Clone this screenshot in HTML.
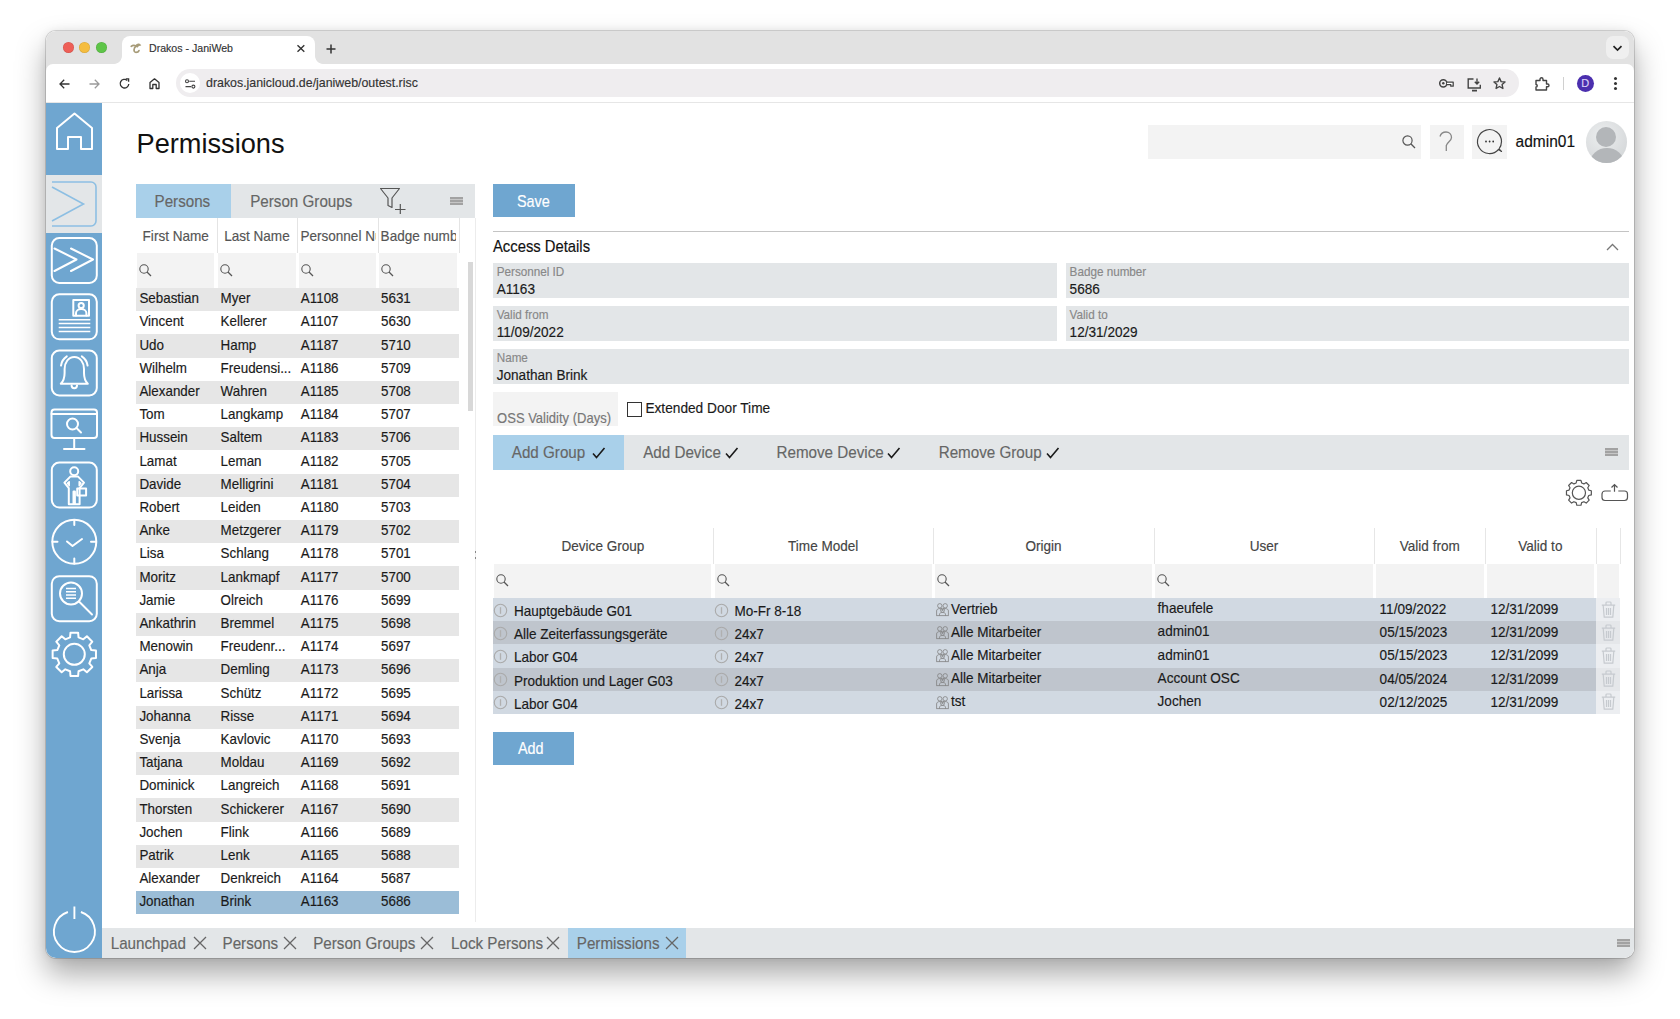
<!DOCTYPE html>
<html><head><meta charset="utf-8">
<style>
*{box-sizing:border-box;margin:0;padding:0}
html,body{width:1680px;height:1019px;overflow:hidden;background:#fff;font-family:"Liberation Sans",sans-serif;}
.a{position:absolute}
#win{position:absolute;left:46px;top:31px;width:1588px;height:927px;border-radius:10px;overflow:hidden;background:#fff;}
#shadow{position:absolute;left:46px;top:31px;width:1588px;height:927px;border-radius:10px;
 box-shadow:0 0 0 1px rgba(0,0,0,0.14),0 16px 30px 0px rgba(0,0,0,0.34),0 0 10px rgba(0,0,0,0.08);}
.t{position:absolute;white-space:pre;line-height:1;-webkit-text-stroke:0.15px currentColor}
svg{position:absolute;overflow:visible}
</style></head><body>
<div id="shadow"></div>
<div id="win">
<div id="pg" class="a" style="left:-46px;top:-31px;width:1680px;height:1019px">

<div class="a" style="left:46.00px;top:31.00px;width:1588.00px;height:41.00px;background:#e2e2e2;"></div>
<div class="a" style="left:62.9px;top:42.3px;width:11px;height:11px;border-radius:50%;background:#ee5f57;box-shadow:inset 0 0 0 0.5px rgba(0,0,0,.12)"></div>
<div class="a" style="left:79.3px;top:42.3px;width:11px;height:11px;border-radius:50%;background:#f5bd3f;box-shadow:inset 0 0 0 0.5px rgba(0,0,0,.12)"></div>
<div class="a" style="left:96.0px;top:42.3px;width:11px;height:11px;border-radius:50%;background:#5ec548;box-shadow:inset 0 0 0 0.5px rgba(0,0,0,.12)"></div>
<div class="a" style="left:122.00px;top:36.00px;width:192.50px;height:30.00px;background:#fff;border-radius:8px 8px 0 0"></div>
<div class="a" style="left:114px;top:56px;width:8px;height:8px;background:radial-gradient(circle at 0 0,#e2e2e2 7.5px,#fff 8.2px)"></div>
<div class="a" style="left:314.5px;top:56px;width:8px;height:8px;background:radial-gradient(circle at 100% 0,#e2e2e2 7.5px,#fff 8.2px)"></div>
<svg style="left:130px;top:42px;" width="12" height="12" viewBox="0 0 12 12"><g stroke="#a79b78" stroke-width="1.7" fill="none" stroke-linecap="round"><path d="M1.2 4.3C2.5 3.2 4.8 3.2 6.3 4.3"/><path d="M6.3 4.3C3.5 5.5 3.2 10.4 6 10.4C7.6 10.4 8.6 9.6 9 8.6"/></g><path d="M5.5 3.8C6.5 1.2 9.5 0.6 11.3 3.5C9.5 3.5 8.3 4.4 7.6 5.8Z" fill="#a79b78"/></svg>
<div class="t" style="left:149.00px;top:43.32px;font-size:10.6px;color:#333;">Drakos - JaniWeb</div>
<svg style="left:297px;top:44.5px;" width="8" height="7" viewBox="0 0 8 7"><path d="M0.5 0.3L7.3 6.7M7.3 0.3L0.5 6.7" stroke="#333" stroke-width="1.4"/></svg>
<svg style="left:326px;top:43.5px;" width="10" height="10" viewBox="0 0 10 10"><path d="M5 0.5V9.5M0.5 5H9.5" stroke="#333" stroke-width="1.5"/></svg>
<div class="a" style="left:1605.70px;top:36.20px;width:23.00px;height:23.00px;background:#efefef;border-radius:7px"></div>
<svg style="left:1612px;top:45px;" width="11" height="7" viewBox="0 0 11 7"><path d="M1.5 1.2L5.5 5L9.5 1.2" stroke="#222" stroke-width="1.7" fill="none"/></svg>
<div class="a" style="left:46.00px;top:64.30px;width:1588.00px;height:38.70px;background:#fff;border-radius:7px 7px 0 0"></div>
<div class="a" style="left:46.00px;top:102.00px;width:1588.00px;height:1.00px;background:#e6e6e6;"></div>
<svg style="left:59px;top:78.5px;" width="11" height="10" viewBox="0 0 11 10"><path d="M10.5 5H1.2M5.2 0.8L1 5L5.2 9.2" stroke="#333" stroke-width="1.3" fill="none"/></svg>
<svg style="left:89px;top:78.5px;" width="11" height="10" viewBox="0 0 11 10"><path d="M0.5 5H9.8M5.8 0.8L10 5L5.8 9.2" stroke="#9a9a9a" stroke-width="1.3" fill="none"/></svg>
<svg style="left:118.5px;top:78px;" width="11" height="11" viewBox="0 0 11 11"><path d="M9.8 6A4.3 4.3 0 1 1 8.3 2.4" stroke="#333" stroke-width="1.3" fill="none"/><path d="M6.8 0.9H9.6V3.7" stroke="#333" stroke-width="1.3" fill="none"/></svg>
<svg style="left:148.5px;top:78px;" width="11" height="11" viewBox="0 0 11 11"><path d="M1 10.5V4.5L5.5 0.8L10 4.5V10.5H7.2V6.5H3.8V10.5Z" stroke="#333" stroke-width="1.3" fill="none" stroke-linejoin="round"/></svg>
<div class="a" style="left:175.50px;top:69.30px;width:1343.00px;height:28.00px;background:#efedef;border-radius:14px"></div>
<div class="a" style="left:180px;top:73.3px;width:20px;height:20px;border-radius:50%;background:#fff"></div>
<svg style="left:184.5px;top:78.5px;" width="11" height="10" viewBox="0 0 11 10"><circle cx="2" cy="2.2" r="1.5" stroke="#444" stroke-width="1.1" fill="none"/><path d="M4.2 2.2H10M0.5 7.6H6.2" stroke="#444" stroke-width="1.1"/><circle cx="8.4" cy="7.6" r="1.5" stroke="#444" stroke-width="1.1" fill="none"/></svg>
<div class="t" style="left:206.00px;top:76.91px;font-size:12.38px;color:#333;">drakos.janicloud.de/janiweb/outest.risc</div>
<svg style="left:1439px;top:79px;" width="16" height="9" viewBox="0 0 16 9"><circle cx="4.3" cy="4.3" r="3.6" stroke="#444" stroke-width="1.5" fill="none"/><circle cx="4.3" cy="4.3" r="1.2" fill="#444"/><path d="M8 3.2H14.2V7.2H11.8V5.6H8" stroke="#444" stroke-width="1.3" fill="#fff" stroke-linejoin="round"/></svg>
<svg style="left:1466.5px;top:77.5px;" width="15" height="14" viewBox="0 0 15 14"><path d="M6.5 1H1.2V10H13.3V6.8" stroke="#444" stroke-width="1.4" fill="none"/><path d="M5 12.6H10" stroke="#444" stroke-width="1.8"/><path d="M10 0.5V6M7.8 3.8L10 6L12.2 3.8" stroke="#444" stroke-width="1.4" fill="none"/></svg>
<svg style="left:1493px;top:76.8px;" width="13" height="13" viewBox="0 0 13 13"><path d="M6.5 1L8.1 4.6L12 5L9.1 7.6L9.9 11.5L6.5 9.5L3.1 11.5L3.9 7.6L1 5L4.9 4.6Z" stroke="#444" stroke-width="1.4" fill="none" stroke-linejoin="round"/></svg>
<svg style="left:1534.5px;top:76.5px;" width="15" height="14" viewBox="0 0 15 14"><path d="M1 3.5H5V2.2A1.5 1.5 0 0 1 8 2.2V3.5H11.5V7H12.6A1.4 1.4 0 0 1 12.6 9.8H11.5V13H1V10A1.2 1.2 0 0 0 1 7.5Z" stroke="#444" stroke-width="1.4" fill="none" stroke-linejoin="round"/></svg>
<div class="a" style="left:1563.00px;top:77.00px;width:1.00px;height:13.00px;background:#d0d0d0;"></div>
<div class="a" style="left:1577px;top:75px;width:17px;height:17px;border-radius:50%;background:#4b2fae"></div>
<div class="t" style="left:1581.30px;top:78.18px;font-size:11px;color:#dcd3f7;">D</div>
<div class="a" style="left:1614.2px;top:76.5px;width:3px;height:3px;border-radius:50%;background:#333"></div>
<div class="a" style="left:1614.2px;top:81.5px;width:3px;height:3px;border-radius:50%;background:#333"></div>
<div class="a" style="left:1614.2px;top:86.5px;width:3px;height:3px;border-radius:50%;background:#333"></div>
<div class="a" style="left:46.00px;top:103.00px;width:56.40px;height:855.00px;background:#6fa6d0;"></div>
<div class="a" style="left:46.00px;top:175.30px;width:56.40px;height:57.30px;background:#e3e6e8;"></div>
<svg style="left:46px;top:103px;" width="56" height="72" viewBox="0 0 56 72"><path d="M11 46V25L28.5 10.5L46 25V46H35V34H22V46Z" stroke="#fff" stroke-width="2" fill="none" stroke-linejoin="round" stroke-linecap="round"/></svg>
<svg style="left:46px;top:175px;" width="56" height="58" viewBox="0 0 56 58"><path d="M6 7H45A5 5 0 0 1 50 12V46A5 5 0 0 1 45 51H6" stroke="#8dbfe3" stroke-width="1.6" fill="none"/><path d="M6 12L37.5 29L6 46" stroke="#8dbfe3" stroke-width="1.6" fill="none"/></svg>
<svg style="left:46px;top:232px;" width="56" height="57" viewBox="0 0 56 57"><rect x="5.8" y="6" width="45" height="45" rx="7.5" stroke="#fff" stroke-width="2" fill="none" stroke-linejoin="round" stroke-linecap="round"/><path d="M8.5 16.5L30.5 27.5L8.5 39M25 16.5L47 27.5L25 39" stroke="#fff" stroke-width="2" fill="none" stroke-linejoin="round" stroke-linecap="round"/></svg>
<svg style="left:46px;top:289px;" width="56" height="57" viewBox="0 0 56 57"><rect x="5.8" y="5.3" width="45" height="45" rx="7.5" stroke="#fff" stroke-width="2" fill="none" stroke-linejoin="round" stroke-linecap="round"/><rect x="27.3" y="11" width="15.7" height="15.8" stroke="#fff" stroke-width="2" fill="none" stroke-linejoin="round" stroke-linecap="round"/><circle cx="35.2" cy="16.5" r="2.6" stroke="#fff" stroke-width="2" fill="none" stroke-linejoin="round" stroke-linecap="round"/><path d="M30 26.5V24A5.2 4 0 0 1 40.4 24V26.5" stroke="#fff" stroke-width="2" fill="none" stroke-linejoin="round" stroke-linecap="round"/><path d="M12.7 30.8H44.3M12.7 34.5H44.3M12.7 38.5H44.3M12.7 42.5H44.3" stroke="#fff" stroke-width="1.6"/></svg>
<svg style="left:46px;top:346px;" width="56" height="57" viewBox="0 0 56 57"><rect x="5.8" y="4.5" width="45" height="45" rx="7.5" stroke="#fff" stroke-width="2" fill="none" stroke-linejoin="round" stroke-linecap="round"/><path d="M14.8 37.8C17.8 34.8 18.6 31 18.6 27V23C18.6 16.5 22.5 10.9 28.3 10.9C34.1 10.9 38 16.5 38 23V27C38 31 38.8 34.8 41.8 37.8Z" stroke="#fff" stroke-width="2" fill="none" stroke-linejoin="round" stroke-linecap="round"/><path d="M25.6 39.6A2.7 2.7 0 0 0 31 39.6" stroke="#fff" stroke-width="2" fill="none" stroke-linejoin="round" stroke-linecap="round"/><path d="M20.8 10.4A13 13 0 0 0 15 19.6M35.8 10.4A13 13 0 0 1 41.6 19.6" stroke="#fff" stroke-width="2" fill="none" stroke-linejoin="round" stroke-linecap="round"/></svg>
<svg style="left:46px;top:403px;" width="56" height="57" viewBox="0 0 56 57"><rect x="5.5" y="6.5" width="45.5" height="28.5" rx="3" stroke="#fff" stroke-width="2" fill="none" stroke-linejoin="round" stroke-linecap="round"/><path d="M5.5 11H51" stroke="#fff" stroke-width="2" fill="none" stroke-linejoin="round" stroke-linecap="round"/><circle cx="26.5" cy="21" r="5.5" stroke="#fff" stroke-width="2" fill="none" stroke-linejoin="round" stroke-linecap="round"/><path d="M30.5 25L35 29.5" stroke="#fff" stroke-width="2" fill="none" stroke-linejoin="round" stroke-linecap="round"/><path d="M28.2 35V45.5M18 46H38.5" stroke="#fff" stroke-width="2" fill="none" stroke-linejoin="round" stroke-linecap="round"/></svg>
<svg style="left:46px;top:460px;" width="56" height="57" viewBox="0 0 56 57"><rect x="5.8" y="2.6" width="45" height="45" rx="7.5" stroke="#fff" stroke-width="2" fill="none" stroke-linejoin="round" stroke-linecap="round"/><circle cx="28.2" cy="11.2" r="4" stroke="#fff" stroke-width="2" fill="none" stroke-linejoin="round" stroke-linecap="round"/><path d="M24.3 16.6H32.1L38 22.6L33.6 28.2V44.2H28.9V31.6H27.5V44.2H22.8V28.2L18.4 22.6Z" stroke="#fff" stroke-width="2" fill="none" stroke-linejoin="round" stroke-linecap="round"/><path d="M23.3 21.6V25.8L21.3 23.2Z M33.1 21.6V25.8L35.1 23.2Z" stroke="#fff" stroke-width="1.3" fill="#fff" stroke-linejoin="round"/><rect x="31.2" y="28.6" width="8.9" height="7" stroke="#fff" stroke-width="2" fill="none" stroke-linejoin="round" stroke-linecap="round"/></svg>
<svg style="left:46px;top:517px;" width="56" height="57" viewBox="0 0 56 57"><circle cx="28.3" cy="24.8" r="22" stroke="#fff" stroke-width="2" fill="none" stroke-linejoin="round" stroke-linecap="round"/><path d="M28.3 3V8M28.3 41.6V46.6M6.5 24.8H11.5M45 24.8H50M21 24.5L26.5 29L36 22" stroke="#fff" stroke-width="2" fill="none" stroke-linejoin="round" stroke-linecap="round"/></svg>
<svg style="left:46px;top:573px;" width="56" height="57" viewBox="0 0 56 57"><rect x="5.8" y="3.2" width="45" height="45" rx="7.5" stroke="#fff" stroke-width="2" fill="none" stroke-linejoin="round" stroke-linecap="round"/><circle cx="25" cy="20.5" r="11" stroke="#fff" stroke-width="2" fill="none" stroke-linejoin="round" stroke-linecap="round"/><path d="M33 28.5L46 41.5" stroke="#fff" stroke-width="2" fill="none" stroke-linejoin="round" stroke-linecap="round"/><path d="M20 15.5H30M20 18.8H30M20 22H30M20 25.3H30" stroke="#fff" stroke-width="1.6"/></svg>
<svg style="left:46px;top:630px;" width="56" height="57" viewBox="0 0 56 57"><path d="M24.07 7.32 L24.48 2.63 L32.12 2.63 L32.53 7.32 L37.31 9.30 L40.92 6.28 L46.32 11.68 L43.30 15.29 L45.28 20.07 L49.97 20.48 L49.97 28.12 L45.28 28.53 L43.30 33.31 L46.32 36.92 L40.92 42.32 L37.31 39.30 L32.53 41.28 L32.12 45.97 L24.48 45.97 L24.07 41.28 L19.29 39.30 L15.68 42.32 L10.28 36.92 L13.30 33.31 L11.32 28.53 L6.63 28.12 L6.63 20.48 L11.32 20.07 L13.30 15.29 L10.28 11.68 L15.68 6.28 L19.29 9.30Z" stroke="#fff" stroke-width="2" fill="none" stroke-linejoin="round" stroke-linecap="round"/><circle cx="28.3" cy="24.3" r="10.5" stroke="#fff" stroke-width="2" fill="none" stroke-linejoin="round" stroke-linecap="round"/></svg>
<svg style="left:46px;top:900px;" width="56" height="58" viewBox="0 0 56 58"><path d="M21.9 12A20.5 20.5 0 1 0 34.9 12" stroke="#fff" stroke-width="1.9" fill="none"/><path d="M28.4 6.5V19" stroke="#fff" stroke-width="1.9"/></svg>
<div class="t" style="left:136.50px;top:129.66px;font-size:27.2px;color:#111;-webkit-text-stroke:0">Permissions</div>
<div class="a" style="left:1148.30px;top:124.90px;width:273.00px;height:34.20px;background:#f3f3f3;"></div>
<svg style="left:1402px;top:135px;" width="14" height="14" viewBox="0 0 14 14"><circle cx="5.5" cy="5.5" r="4.6" stroke="#555" stroke-width="1.2" fill="none"/><path d="M8.8 8.8L13 13" stroke="#555" stroke-width="1.3"/></svg>
<div class="a" style="left:1429.60px;top:124.90px;width:34.20px;height:34.20px;background:#f3f3f3;"></div>
<svg style="left:1438px;top:131px;" width="16" height="22" viewBox="0 0 16 22"><path d="M2 5.5C3 2 5.5 1 8 1C11 1 13.5 3 13.5 6.5C13.5 10 9 11 8.3 14.5V20" stroke="#888" stroke-width="1.3" fill="none"/></svg>
<div class="a" style="left:1472.40px;top:124.90px;width:34.60px;height:34.20px;background:#f3f3f3;"></div>
<svg style="left:1476px;top:128px;" width="28" height="28" viewBox="0 0 28 28"><path d="M22.5 21.5A12 12 0 1 1 25.5 13.5C25.5 16.5 24.5 19 23 21L25.5 23.5Z" stroke="#444" stroke-width="1.2" fill="none" stroke-linejoin="round"/><circle cx="10" cy="13.5" r="0.9" fill="#333"/><circle cx="13.6" cy="13.5" r="0.9" fill="#333"/><circle cx="17.2" cy="13.5" r="0.9" fill="#333"/></svg>
<div class="t" style="left:1515.60px;top:134.17px;font-size:15.5px;color:#111;transform:scaleY(1.09);transform-origin:0 13.13px;">admin01</div>
<div class="a" style="left:1585.5px;top:121.3px;width:41.7px;height:41.7px;border-radius:50%;overflow:hidden;background:radial-gradient(circle at 40% 35%,#eceeef,#cfd2d4)"><div class="a" style="left:10.8px;top:5.3px;width:20px;height:20px;border-radius:50%;background:#b3b6b9"></div><div class="a" style="left:4px;top:27px;width:34px;height:30px;border-radius:50%;background:#b3b6b9"></div></div>
<div class="a" style="left:135.60px;top:184.00px;width:339.00px;height:33.60px;background:#e3e6e8;"></div>
<div class="a" style="left:135.60px;top:184.00px;width:95.00px;height:33.60px;background:#a9d0ea;"></div>
<div class="t" style="left:154.50px;top:193.83px;font-size:15.2px;color:#666;transform:scaleY(1.09);transform-origin:0 12.87px;">Persons</div>
<div class="t" style="left:250.20px;top:193.83px;font-size:15.2px;color:#666;transform:scaleY(1.09);transform-origin:0 12.87px;">Person Groups</div>
<svg style="left:379px;top:187px;" width="28" height="28" viewBox="0 0 28 28"><path d="M1.5 1.5H20.5L13 11V20.5L9 18.5V11Z" stroke="#555" stroke-width="1.2" fill="none" stroke-linejoin="round"/><path d="M16 22.5H26.5M21.3 17V27" stroke="#555" stroke-width="1.2"/></svg>
<div class="a" style="left:449.90px;top:196.80px;width:13.20px;height:8.20px;background:#c6c6c6;"></div>
<div class="a" style="left:449.90px;top:196.80px;width:13.20px;height:2.00px;background:#a2a2a2;"></div>
<div class="a" style="left:449.90px;top:199.90px;width:13.20px;height:2.00px;background:#a2a2a2;"></div>
<div class="a" style="left:449.90px;top:203.00px;width:13.20px;height:2.00px;background:#a2a2a2;"></div>
<div class="a" style="left:216.50px;top:218.00px;width:1.00px;height:35.00px;background:#e4e4e4;"></div>
<div class="a" style="left:297.30px;top:218.00px;width:1.00px;height:35.00px;background:#e4e4e4;"></div>
<div class="a" style="left:377.50px;top:218.00px;width:1.00px;height:35.00px;background:#e4e4e4;"></div>
<div class="a" style="left:458.50px;top:218.00px;width:1.00px;height:35.00px;background:#e4e4e4;"></div>
<div class="a" style="left:137px;top:218px;width:79px;height:35px;overflow:hidden">
<div class="t" style="left:5.60px;top:11.52px;font-size:13.55px;color:#555;transform:scaleY(1.09);transform-origin:0 11.48px;">First Name</div>
</div>
<div class="a" style="left:217.5px;top:218px;width:79.8px;height:35px;overflow:hidden">
<div class="t" style="left:6.70px;top:11.52px;font-size:13.55px;color:#555;transform:scaleY(1.09);transform-origin:0 11.48px;">Last Name</div>
</div>
<div class="a" style="left:298.3px;top:218px;width:77.5px;height:35px;overflow:hidden">
<div class="t" style="left:2.10px;top:11.52px;font-size:13.55px;color:#555;transform:scaleY(1.09);transform-origin:0 11.48px;">Personnel Number</div>
</div>
<div class="a" style="left:378.5px;top:218px;width:77.5px;height:35px;overflow:hidden">
<div class="t" style="left:2.10px;top:11.52px;font-size:13.55px;color:#555;transform:scaleY(1.09);transform-origin:0 11.48px;">Badge number</div>
</div>
<div class="a" style="left:137.30px;top:253.00px;width:77.10px;height:34.50px;background:#f3f3f3;"></div>
<svg style="left:139px;top:264px;" width="13" height="13" viewBox="0 0 13 13"><circle cx="5" cy="5" r="4.2" stroke="#555" stroke-width="1.1" fill="none"/><path d="M8 8L12 12" stroke="#555" stroke-width="1.2"/></svg>
<div class="a" style="left:218.00px;top:253.00px;width:78.00px;height:34.50px;background:#f3f3f3;"></div>
<svg style="left:220px;top:264px;" width="13" height="13" viewBox="0 0 13 13"><circle cx="5" cy="5" r="4.2" stroke="#555" stroke-width="1.1" fill="none"/><path d="M8 8L12 12" stroke="#555" stroke-width="1.2"/></svg>
<div class="a" style="left:299.00px;top:253.00px;width:77.00px;height:34.50px;background:#f3f3f3;"></div>
<svg style="left:301px;top:264px;" width="13" height="13" viewBox="0 0 13 13"><circle cx="5" cy="5" r="4.2" stroke="#555" stroke-width="1.1" fill="none"/><path d="M8 8L12 12" stroke="#555" stroke-width="1.2"/></svg>
<div class="a" style="left:379.00px;top:253.00px;width:78.00px;height:34.50px;background:#f3f3f3;"></div>
<svg style="left:381px;top:264px;" width="13" height="13" viewBox="0 0 13 13"><circle cx="5" cy="5" r="4.2" stroke="#555" stroke-width="1.1" fill="none"/><path d="M8 8L12 12" stroke="#555" stroke-width="1.2"/></svg>
<div class="a" style="left:467.50px;top:262.30px;width:5.50px;height:148.70px;background:#d8d8d8;"></div>
<div class="a" style="left:474.80px;top:218.00px;width:1.00px;height:704.00px;background:#ececec;"></div>
<div class="a" style="left:474.50px;top:550.50px;width:1.60px;height:2.00px;background:#888;"></div>
<div class="a" style="left:474.50px;top:556.50px;width:1.60px;height:2.00px;background:#888;"></div>
<div class="a" style="left:135.60px;top:288.00px;width:323.20px;height:23.20px;background:#e6e6e6;"></div>
<div class="t" style="left:139.40px;top:292.15px;font-size:13.4px;color:#1a1a1a;transform:scaleY(1.09);transform-origin:0 11.35px;">Sebastian</div>
<div class="t" style="left:220.60px;top:292.15px;font-size:13.4px;color:#1a1a1a;transform:scaleY(1.09);transform-origin:0 11.35px;">Myer</div>
<div class="t" style="left:300.80px;top:292.15px;font-size:13.4px;color:#1a1a1a;transform:scaleY(1.09);transform-origin:0 11.35px;">A1108</div>
<div class="t" style="left:381.00px;top:292.15px;font-size:13.4px;color:#1a1a1a;transform:scaleY(1.09);transform-origin:0 11.35px;">5631</div>
<div class="t" style="left:139.40px;top:315.35px;font-size:13.4px;color:#1a1a1a;transform:scaleY(1.09);transform-origin:0 11.35px;">Vincent</div>
<div class="t" style="left:220.60px;top:315.35px;font-size:13.4px;color:#1a1a1a;transform:scaleY(1.09);transform-origin:0 11.35px;">Kellerer</div>
<div class="t" style="left:300.80px;top:315.35px;font-size:13.4px;color:#1a1a1a;transform:scaleY(1.09);transform-origin:0 11.35px;">A1107</div>
<div class="t" style="left:381.00px;top:315.35px;font-size:13.4px;color:#1a1a1a;transform:scaleY(1.09);transform-origin:0 11.35px;">5630</div>
<div class="a" style="left:135.60px;top:334.40px;width:323.20px;height:23.20px;background:#e6e6e6;"></div>
<div class="t" style="left:139.40px;top:338.55px;font-size:13.4px;color:#1a1a1a;transform:scaleY(1.09);transform-origin:0 11.35px;">Udo</div>
<div class="t" style="left:220.60px;top:338.55px;font-size:13.4px;color:#1a1a1a;transform:scaleY(1.09);transform-origin:0 11.35px;">Hamp</div>
<div class="t" style="left:300.80px;top:338.55px;font-size:13.4px;color:#1a1a1a;transform:scaleY(1.09);transform-origin:0 11.35px;">A1187</div>
<div class="t" style="left:381.00px;top:338.55px;font-size:13.4px;color:#1a1a1a;transform:scaleY(1.09);transform-origin:0 11.35px;">5710</div>
<div class="t" style="left:139.40px;top:361.75px;font-size:13.4px;color:#1a1a1a;transform:scaleY(1.09);transform-origin:0 11.35px;">Wilhelm</div>
<div class="t" style="left:220.60px;top:361.75px;font-size:13.4px;color:#1a1a1a;transform:scaleY(1.09);transform-origin:0 11.35px;">Freudensi...</div>
<div class="t" style="left:300.80px;top:361.75px;font-size:13.4px;color:#1a1a1a;transform:scaleY(1.09);transform-origin:0 11.35px;">A1186</div>
<div class="t" style="left:381.00px;top:361.75px;font-size:13.4px;color:#1a1a1a;transform:scaleY(1.09);transform-origin:0 11.35px;">5709</div>
<div class="a" style="left:135.60px;top:380.80px;width:323.20px;height:23.20px;background:#e6e6e6;"></div>
<div class="t" style="left:139.40px;top:384.95px;font-size:13.4px;color:#1a1a1a;transform:scaleY(1.09);transform-origin:0 11.35px;">Alexander</div>
<div class="t" style="left:220.60px;top:384.95px;font-size:13.4px;color:#1a1a1a;transform:scaleY(1.09);transform-origin:0 11.35px;">Wahren</div>
<div class="t" style="left:300.80px;top:384.95px;font-size:13.4px;color:#1a1a1a;transform:scaleY(1.09);transform-origin:0 11.35px;">A1185</div>
<div class="t" style="left:381.00px;top:384.95px;font-size:13.4px;color:#1a1a1a;transform:scaleY(1.09);transform-origin:0 11.35px;">5708</div>
<div class="t" style="left:139.40px;top:408.15px;font-size:13.4px;color:#1a1a1a;transform:scaleY(1.09);transform-origin:0 11.35px;">Tom</div>
<div class="t" style="left:220.60px;top:408.15px;font-size:13.4px;color:#1a1a1a;transform:scaleY(1.09);transform-origin:0 11.35px;">Langkamp</div>
<div class="t" style="left:300.80px;top:408.15px;font-size:13.4px;color:#1a1a1a;transform:scaleY(1.09);transform-origin:0 11.35px;">A1184</div>
<div class="t" style="left:381.00px;top:408.15px;font-size:13.4px;color:#1a1a1a;transform:scaleY(1.09);transform-origin:0 11.35px;">5707</div>
<div class="a" style="left:135.60px;top:427.20px;width:323.20px;height:23.20px;background:#e6e6e6;"></div>
<div class="t" style="left:139.40px;top:431.35px;font-size:13.4px;color:#1a1a1a;transform:scaleY(1.09);transform-origin:0 11.35px;">Hussein</div>
<div class="t" style="left:220.60px;top:431.35px;font-size:13.4px;color:#1a1a1a;transform:scaleY(1.09);transform-origin:0 11.35px;">Saltem</div>
<div class="t" style="left:300.80px;top:431.35px;font-size:13.4px;color:#1a1a1a;transform:scaleY(1.09);transform-origin:0 11.35px;">A1183</div>
<div class="t" style="left:381.00px;top:431.35px;font-size:13.4px;color:#1a1a1a;transform:scaleY(1.09);transform-origin:0 11.35px;">5706</div>
<div class="t" style="left:139.40px;top:454.55px;font-size:13.4px;color:#1a1a1a;transform:scaleY(1.09);transform-origin:0 11.35px;">Lamat</div>
<div class="t" style="left:220.60px;top:454.55px;font-size:13.4px;color:#1a1a1a;transform:scaleY(1.09);transform-origin:0 11.35px;">Leman</div>
<div class="t" style="left:300.80px;top:454.55px;font-size:13.4px;color:#1a1a1a;transform:scaleY(1.09);transform-origin:0 11.35px;">A1182</div>
<div class="t" style="left:381.00px;top:454.55px;font-size:13.4px;color:#1a1a1a;transform:scaleY(1.09);transform-origin:0 11.35px;">5705</div>
<div class="a" style="left:135.60px;top:473.60px;width:323.20px;height:23.20px;background:#e6e6e6;"></div>
<div class="t" style="left:139.40px;top:477.75px;font-size:13.4px;color:#1a1a1a;transform:scaleY(1.09);transform-origin:0 11.35px;">Davide</div>
<div class="t" style="left:220.60px;top:477.75px;font-size:13.4px;color:#1a1a1a;transform:scaleY(1.09);transform-origin:0 11.35px;">Melligrini</div>
<div class="t" style="left:300.80px;top:477.75px;font-size:13.4px;color:#1a1a1a;transform:scaleY(1.09);transform-origin:0 11.35px;">A1181</div>
<div class="t" style="left:381.00px;top:477.75px;font-size:13.4px;color:#1a1a1a;transform:scaleY(1.09);transform-origin:0 11.35px;">5704</div>
<div class="t" style="left:139.40px;top:500.95px;font-size:13.4px;color:#1a1a1a;transform:scaleY(1.09);transform-origin:0 11.35px;">Robert</div>
<div class="t" style="left:220.60px;top:500.95px;font-size:13.4px;color:#1a1a1a;transform:scaleY(1.09);transform-origin:0 11.35px;">Leiden</div>
<div class="t" style="left:300.80px;top:500.95px;font-size:13.4px;color:#1a1a1a;transform:scaleY(1.09);transform-origin:0 11.35px;">A1180</div>
<div class="t" style="left:381.00px;top:500.95px;font-size:13.4px;color:#1a1a1a;transform:scaleY(1.09);transform-origin:0 11.35px;">5703</div>
<div class="a" style="left:135.60px;top:520.00px;width:323.20px;height:23.20px;background:#e6e6e6;"></div>
<div class="t" style="left:139.40px;top:524.15px;font-size:13.4px;color:#1a1a1a;transform:scaleY(1.09);transform-origin:0 11.35px;">Anke</div>
<div class="t" style="left:220.60px;top:524.15px;font-size:13.4px;color:#1a1a1a;transform:scaleY(1.09);transform-origin:0 11.35px;">Metzgerer</div>
<div class="t" style="left:300.80px;top:524.15px;font-size:13.4px;color:#1a1a1a;transform:scaleY(1.09);transform-origin:0 11.35px;">A1179</div>
<div class="t" style="left:381.00px;top:524.15px;font-size:13.4px;color:#1a1a1a;transform:scaleY(1.09);transform-origin:0 11.35px;">5702</div>
<div class="t" style="left:139.40px;top:547.35px;font-size:13.4px;color:#1a1a1a;transform:scaleY(1.09);transform-origin:0 11.35px;">Lisa</div>
<div class="t" style="left:220.60px;top:547.35px;font-size:13.4px;color:#1a1a1a;transform:scaleY(1.09);transform-origin:0 11.35px;">Schlang</div>
<div class="t" style="left:300.80px;top:547.35px;font-size:13.4px;color:#1a1a1a;transform:scaleY(1.09);transform-origin:0 11.35px;">A1178</div>
<div class="t" style="left:381.00px;top:547.35px;font-size:13.4px;color:#1a1a1a;transform:scaleY(1.09);transform-origin:0 11.35px;">5701</div>
<div class="a" style="left:135.60px;top:566.40px;width:323.20px;height:23.20px;background:#e6e6e6;"></div>
<div class="t" style="left:139.40px;top:570.55px;font-size:13.4px;color:#1a1a1a;transform:scaleY(1.09);transform-origin:0 11.35px;">Moritz</div>
<div class="t" style="left:220.60px;top:570.55px;font-size:13.4px;color:#1a1a1a;transform:scaleY(1.09);transform-origin:0 11.35px;">Lankmapf</div>
<div class="t" style="left:300.80px;top:570.55px;font-size:13.4px;color:#1a1a1a;transform:scaleY(1.09);transform-origin:0 11.35px;">A1177</div>
<div class="t" style="left:381.00px;top:570.55px;font-size:13.4px;color:#1a1a1a;transform:scaleY(1.09);transform-origin:0 11.35px;">5700</div>
<div class="t" style="left:139.40px;top:593.75px;font-size:13.4px;color:#1a1a1a;transform:scaleY(1.09);transform-origin:0 11.35px;">Jamie</div>
<div class="t" style="left:220.60px;top:593.75px;font-size:13.4px;color:#1a1a1a;transform:scaleY(1.09);transform-origin:0 11.35px;">Olreich</div>
<div class="t" style="left:300.80px;top:593.75px;font-size:13.4px;color:#1a1a1a;transform:scaleY(1.09);transform-origin:0 11.35px;">A1176</div>
<div class="t" style="left:381.00px;top:593.75px;font-size:13.4px;color:#1a1a1a;transform:scaleY(1.09);transform-origin:0 11.35px;">5699</div>
<div class="a" style="left:135.60px;top:612.80px;width:323.20px;height:23.20px;background:#e6e6e6;"></div>
<div class="t" style="left:139.40px;top:616.95px;font-size:13.4px;color:#1a1a1a;transform:scaleY(1.09);transform-origin:0 11.35px;">Ankathrin</div>
<div class="t" style="left:220.60px;top:616.95px;font-size:13.4px;color:#1a1a1a;transform:scaleY(1.09);transform-origin:0 11.35px;">Bremmel</div>
<div class="t" style="left:300.80px;top:616.95px;font-size:13.4px;color:#1a1a1a;transform:scaleY(1.09);transform-origin:0 11.35px;">A1175</div>
<div class="t" style="left:381.00px;top:616.95px;font-size:13.4px;color:#1a1a1a;transform:scaleY(1.09);transform-origin:0 11.35px;">5698</div>
<div class="t" style="left:139.40px;top:640.15px;font-size:13.4px;color:#1a1a1a;transform:scaleY(1.09);transform-origin:0 11.35px;">Menowin</div>
<div class="t" style="left:220.60px;top:640.15px;font-size:13.4px;color:#1a1a1a;transform:scaleY(1.09);transform-origin:0 11.35px;">Freudenr...</div>
<div class="t" style="left:300.80px;top:640.15px;font-size:13.4px;color:#1a1a1a;transform:scaleY(1.09);transform-origin:0 11.35px;">A1174</div>
<div class="t" style="left:381.00px;top:640.15px;font-size:13.4px;color:#1a1a1a;transform:scaleY(1.09);transform-origin:0 11.35px;">5697</div>
<div class="a" style="left:135.60px;top:659.20px;width:323.20px;height:23.20px;background:#e6e6e6;"></div>
<div class="t" style="left:139.40px;top:663.35px;font-size:13.4px;color:#1a1a1a;transform:scaleY(1.09);transform-origin:0 11.35px;">Anja</div>
<div class="t" style="left:220.60px;top:663.35px;font-size:13.4px;color:#1a1a1a;transform:scaleY(1.09);transform-origin:0 11.35px;">Demling</div>
<div class="t" style="left:300.80px;top:663.35px;font-size:13.4px;color:#1a1a1a;transform:scaleY(1.09);transform-origin:0 11.35px;">A1173</div>
<div class="t" style="left:381.00px;top:663.35px;font-size:13.4px;color:#1a1a1a;transform:scaleY(1.09);transform-origin:0 11.35px;">5696</div>
<div class="t" style="left:139.40px;top:686.55px;font-size:13.4px;color:#1a1a1a;transform:scaleY(1.09);transform-origin:0 11.35px;">Larissa</div>
<div class="t" style="left:220.60px;top:686.55px;font-size:13.4px;color:#1a1a1a;transform:scaleY(1.09);transform-origin:0 11.35px;">Schütz</div>
<div class="t" style="left:300.80px;top:686.55px;font-size:13.4px;color:#1a1a1a;transform:scaleY(1.09);transform-origin:0 11.35px;">A1172</div>
<div class="t" style="left:381.00px;top:686.55px;font-size:13.4px;color:#1a1a1a;transform:scaleY(1.09);transform-origin:0 11.35px;">5695</div>
<div class="a" style="left:135.60px;top:705.60px;width:323.20px;height:23.20px;background:#e6e6e6;"></div>
<div class="t" style="left:139.40px;top:709.75px;font-size:13.4px;color:#1a1a1a;transform:scaleY(1.09);transform-origin:0 11.35px;">Johanna</div>
<div class="t" style="left:220.60px;top:709.75px;font-size:13.4px;color:#1a1a1a;transform:scaleY(1.09);transform-origin:0 11.35px;">Risse</div>
<div class="t" style="left:300.80px;top:709.75px;font-size:13.4px;color:#1a1a1a;transform:scaleY(1.09);transform-origin:0 11.35px;">A1171</div>
<div class="t" style="left:381.00px;top:709.75px;font-size:13.4px;color:#1a1a1a;transform:scaleY(1.09);transform-origin:0 11.35px;">5694</div>
<div class="t" style="left:139.40px;top:732.95px;font-size:13.4px;color:#1a1a1a;transform:scaleY(1.09);transform-origin:0 11.35px;">Svenja</div>
<div class="t" style="left:220.60px;top:732.95px;font-size:13.4px;color:#1a1a1a;transform:scaleY(1.09);transform-origin:0 11.35px;">Kavlovic</div>
<div class="t" style="left:300.80px;top:732.95px;font-size:13.4px;color:#1a1a1a;transform:scaleY(1.09);transform-origin:0 11.35px;">A1170</div>
<div class="t" style="left:381.00px;top:732.95px;font-size:13.4px;color:#1a1a1a;transform:scaleY(1.09);transform-origin:0 11.35px;">5693</div>
<div class="a" style="left:135.60px;top:752.00px;width:323.20px;height:23.20px;background:#e6e6e6;"></div>
<div class="t" style="left:139.40px;top:756.15px;font-size:13.4px;color:#1a1a1a;transform:scaleY(1.09);transform-origin:0 11.35px;">Tatjana</div>
<div class="t" style="left:220.60px;top:756.15px;font-size:13.4px;color:#1a1a1a;transform:scaleY(1.09);transform-origin:0 11.35px;">Moldau</div>
<div class="t" style="left:300.80px;top:756.15px;font-size:13.4px;color:#1a1a1a;transform:scaleY(1.09);transform-origin:0 11.35px;">A1169</div>
<div class="t" style="left:381.00px;top:756.15px;font-size:13.4px;color:#1a1a1a;transform:scaleY(1.09);transform-origin:0 11.35px;">5692</div>
<div class="t" style="left:139.40px;top:779.35px;font-size:13.4px;color:#1a1a1a;transform:scaleY(1.09);transform-origin:0 11.35px;">Dominick</div>
<div class="t" style="left:220.60px;top:779.35px;font-size:13.4px;color:#1a1a1a;transform:scaleY(1.09);transform-origin:0 11.35px;">Langreich</div>
<div class="t" style="left:300.80px;top:779.35px;font-size:13.4px;color:#1a1a1a;transform:scaleY(1.09);transform-origin:0 11.35px;">A1168</div>
<div class="t" style="left:381.00px;top:779.35px;font-size:13.4px;color:#1a1a1a;transform:scaleY(1.09);transform-origin:0 11.35px;">5691</div>
<div class="a" style="left:135.60px;top:798.40px;width:323.20px;height:23.20px;background:#e6e6e6;"></div>
<div class="t" style="left:139.40px;top:802.55px;font-size:13.4px;color:#1a1a1a;transform:scaleY(1.09);transform-origin:0 11.35px;">Thorsten</div>
<div class="t" style="left:220.60px;top:802.55px;font-size:13.4px;color:#1a1a1a;transform:scaleY(1.09);transform-origin:0 11.35px;">Schickerer</div>
<div class="t" style="left:300.80px;top:802.55px;font-size:13.4px;color:#1a1a1a;transform:scaleY(1.09);transform-origin:0 11.35px;">A1167</div>
<div class="t" style="left:381.00px;top:802.55px;font-size:13.4px;color:#1a1a1a;transform:scaleY(1.09);transform-origin:0 11.35px;">5690</div>
<div class="t" style="left:139.40px;top:825.75px;font-size:13.4px;color:#1a1a1a;transform:scaleY(1.09);transform-origin:0 11.35px;">Jochen</div>
<div class="t" style="left:220.60px;top:825.75px;font-size:13.4px;color:#1a1a1a;transform:scaleY(1.09);transform-origin:0 11.35px;">Flink</div>
<div class="t" style="left:300.80px;top:825.75px;font-size:13.4px;color:#1a1a1a;transform:scaleY(1.09);transform-origin:0 11.35px;">A1166</div>
<div class="t" style="left:381.00px;top:825.75px;font-size:13.4px;color:#1a1a1a;transform:scaleY(1.09);transform-origin:0 11.35px;">5689</div>
<div class="a" style="left:135.60px;top:844.80px;width:323.20px;height:23.20px;background:#e6e6e6;"></div>
<div class="t" style="left:139.40px;top:848.95px;font-size:13.4px;color:#1a1a1a;transform:scaleY(1.09);transform-origin:0 11.35px;">Patrik</div>
<div class="t" style="left:220.60px;top:848.95px;font-size:13.4px;color:#1a1a1a;transform:scaleY(1.09);transform-origin:0 11.35px;">Lenk</div>
<div class="t" style="left:300.80px;top:848.95px;font-size:13.4px;color:#1a1a1a;transform:scaleY(1.09);transform-origin:0 11.35px;">A1165</div>
<div class="t" style="left:381.00px;top:848.95px;font-size:13.4px;color:#1a1a1a;transform:scaleY(1.09);transform-origin:0 11.35px;">5688</div>
<div class="t" style="left:139.40px;top:872.15px;font-size:13.4px;color:#1a1a1a;transform:scaleY(1.09);transform-origin:0 11.35px;">Alexander</div>
<div class="t" style="left:220.60px;top:872.15px;font-size:13.4px;color:#1a1a1a;transform:scaleY(1.09);transform-origin:0 11.35px;">Denkreich</div>
<div class="t" style="left:300.80px;top:872.15px;font-size:13.4px;color:#1a1a1a;transform:scaleY(1.09);transform-origin:0 11.35px;">A1164</div>
<div class="t" style="left:381.00px;top:872.15px;font-size:13.4px;color:#1a1a1a;transform:scaleY(1.09);transform-origin:0 11.35px;">5687</div>
<div class="a" style="left:135.60px;top:891.20px;width:323.20px;height:23.20px;background:#9bbdd7;"></div>
<div class="t" style="left:139.40px;top:895.35px;font-size:13.4px;color:#1a1a1a;transform:scaleY(1.09);transform-origin:0 11.35px;">Jonathan</div>
<div class="t" style="left:220.60px;top:895.35px;font-size:13.4px;color:#1a1a1a;transform:scaleY(1.09);transform-origin:0 11.35px;">Brink</div>
<div class="t" style="left:300.80px;top:895.35px;font-size:13.4px;color:#1a1a1a;transform:scaleY(1.09);transform-origin:0 11.35px;">A1163</div>
<div class="t" style="left:381.00px;top:895.35px;font-size:13.4px;color:#1a1a1a;transform:scaleY(1.09);transform-origin:0 11.35px;">5686</div>
<div class="a" style="left:492.90px;top:183.90px;width:81.70px;height:33.50px;background:#6fa6d0;"></div>
<div class="t" style="left:516.90px;top:194.50px;font-size:14.4px;color:#fff;transform:scaleY(1.09);transform-origin:0 12.20px;">Save</div>
<div class="a" style="left:492.90px;top:230.60px;width:1136.50px;height:1.20px;background:#c4c4c4;"></div>
<div class="t" style="left:493.00px;top:240.36px;font-size:14.8px;color:#111;transform:scaleY(1.09);transform-origin:0 12.54px;">Access Details</div>
<svg style="left:1606px;top:243px;" width="13" height="8" viewBox="0 0 13 8"><path d="M1 7L6.5 1.5L12 7" stroke="#777" stroke-width="1.3" fill="none"/></svg>
<div class="a" style="left:492.90px;top:263.10px;width:564.30px;height:34.50px;background:#e3e6e8;"></div>
<div class="t" style="left:496.70px;top:266.39px;font-size:11.7px;color:#888;transform:scaleY(1.09);transform-origin:0 9.91px;">Personnel ID</div>
<div class="t" style="left:496.70px;top:282.98px;font-size:13.6px;color:#1a1a1a;transform:scaleY(1.09);transform-origin:0 11.52px;">A1163</div>
<div class="a" style="left:1065.80px;top:263.10px;width:563.50px;height:34.50px;background:#e3e6e8;"></div>
<div class="t" style="left:1069.60px;top:266.39px;font-size:11.7px;color:#888;transform:scaleY(1.09);transform-origin:0 9.91px;">Badge number</div>
<div class="t" style="left:1069.60px;top:282.98px;font-size:13.6px;color:#1a1a1a;transform:scaleY(1.09);transform-origin:0 11.52px;">5686</div>
<div class="a" style="left:492.90px;top:306.00px;width:564.30px;height:34.50px;background:#e3e6e8;"></div>
<div class="t" style="left:496.70px;top:309.29px;font-size:11.7px;color:#888;transform:scaleY(1.09);transform-origin:0 9.91px;">Valid from</div>
<div class="t" style="left:496.70px;top:325.88px;font-size:13.6px;color:#1a1a1a;transform:scaleY(1.09);transform-origin:0 11.52px;">11/09/2022</div>
<div class="a" style="left:1065.80px;top:306.00px;width:563.50px;height:34.50px;background:#e3e6e8;"></div>
<div class="t" style="left:1069.60px;top:309.29px;font-size:11.7px;color:#888;transform:scaleY(1.09);transform-origin:0 9.91px;">Valid to</div>
<div class="t" style="left:1069.60px;top:325.88px;font-size:13.6px;color:#1a1a1a;transform:scaleY(1.09);transform-origin:0 11.52px;">12/31/2029</div>
<div class="a" style="left:492.90px;top:349.10px;width:1136.50px;height:34.50px;background:#e3e6e8;"></div>
<div class="t" style="left:496.70px;top:352.39px;font-size:11.7px;color:#888;transform:scaleY(1.09);transform-origin:0 9.91px;">Name</div>
<div class="t" style="left:496.70px;top:368.98px;font-size:13.6px;color:#1a1a1a;transform:scaleY(1.09);transform-origin:0 11.52px;">Jonathan Brink</div>
<div class="a" style="left:493.00px;top:392.10px;width:125.00px;height:34.30px;background:#f3f3f3;"></div>
<div class="t" style="left:497.10px;top:411.89px;font-size:13.0px;color:#777;transform:scaleY(1.09);transform-origin:0 11.01px;">OSS Validity (Days)</div>
<div class="a" style="left:627.00px;top:402.30px;width:14.80px;height:14.30px;background:#fff;border:1.6px solid #333"></div>
<div class="t" style="left:645.40px;top:402.00px;font-size:13.7px;color:#1a1a1a;transform:scaleY(1.09);transform-origin:0 11.60px;">Extended Door Time</div>
<div class="a" style="left:492.90px;top:435.20px;width:1136.50px;height:34.50px;background:#e3e6e8;"></div>
<div class="a" style="left:492.90px;top:435.20px;width:131.00px;height:34.50px;background:#a9d0ea;"></div>
<div class="t" style="left:511.80px;top:445.43px;font-size:15.2px;color:#666;transform:scaleY(1.09);transform-origin:0 12.87px;">Add Group</div>
<svg style="left:592px;top:447px;" width="14" height="12" viewBox="0 0 14 12"><path d="M1 6.5L4.5 10.5L12.5 1" stroke="#1a1a1a" stroke-width="1.6" fill="none"/></svg>
<div class="t" style="left:643.20px;top:445.43px;font-size:15.2px;color:#666;transform:scaleY(1.09);transform-origin:0 12.87px;">Add Device</div>
<svg style="left:725px;top:447px;" width="14" height="12" viewBox="0 0 14 12"><path d="M1 6.5L4.5 10.5L12.5 1" stroke="#1a1a1a" stroke-width="1.6" fill="none"/></svg>
<div class="t" style="left:776.50px;top:445.43px;font-size:15.2px;color:#666;transform:scaleY(1.09);transform-origin:0 12.87px;">Remove Device</div>
<svg style="left:887px;top:447px;" width="14" height="12" viewBox="0 0 14 12"><path d="M1 6.5L4.5 10.5L12.5 1" stroke="#1a1a1a" stroke-width="1.6" fill="none"/></svg>
<div class="t" style="left:938.70px;top:445.43px;font-size:15.2px;color:#666;transform:scaleY(1.09);transform-origin:0 12.87px;">Remove Group</div>
<svg style="left:1046px;top:447px;" width="14" height="12" viewBox="0 0 14 12"><path d="M1 6.5L4.5 10.5L12.5 1" stroke="#1a1a1a" stroke-width="1.6" fill="none"/></svg>
<div class="a" style="left:1604.50px;top:448.20px;width:13.20px;height:8.20px;background:#c6c6c6;"></div>
<div class="a" style="left:1604.50px;top:448.20px;width:13.20px;height:2.00px;background:#a2a2a2;"></div>
<div class="a" style="left:1604.50px;top:451.30px;width:13.20px;height:2.00px;background:#a2a2a2;"></div>
<div class="a" style="left:1604.50px;top:454.40px;width:13.20px;height:2.00px;background:#a2a2a2;"></div>
<svg style="left:1563px;top:478px;" width="30" height="30" viewBox="0 0 30 30"><path d="M13.17 4.97 L13.82 2.37 L17.98 2.37 L18.63 4.97 L20.92 5.92 L23.22 4.54 L26.16 7.48 L24.78 9.78 L25.73 12.07 L28.33 12.72 L28.33 16.88 L25.73 17.53 L24.78 19.82 L26.16 22.12 L23.22 25.06 L20.92 23.68 L18.63 24.63 L17.98 27.23 L13.82 27.23 L13.17 24.63 L10.88 23.68 L8.58 25.06 L5.64 22.12 L7.02 19.82 L6.07 17.53 L3.47 16.88 L3.47 12.72 L6.07 12.07 L7.02 9.78 L5.64 7.48 L8.58 4.54 L10.88 5.92Z" stroke="#555" stroke-width="1.2" fill="none" stroke-linejoin="round"/><circle cx="15.9" cy="14.8" r="6.6" stroke="#555" stroke-width="1.2" fill="none"/></svg>
<svg style="left:1600px;top:482px;" width="30" height="20" viewBox="0 0 30 20"><path d="M10.8 9H5A3 3 0 0 0 2 12V15.5A3 3 0 0 0 5 18.5H24.5A3 3 0 0 0 27.5 15.5V12A3 3 0 0 0 24.5 9H18.3" stroke="#555" stroke-width="1.2" fill="none"/><path d="M14.5 9.8V2.3M11.5 5.5L14.5 2.5L17.5 5.5" stroke="#555" stroke-width="1.2" fill="none"/></svg>
<div class="a" style="left:713.00px;top:528.00px;width:1.00px;height:35.50px;background:#e6e6e6;"></div>
<div class="a" style="left:933.40px;top:528.00px;width:1.00px;height:35.50px;background:#e6e6e6;"></div>
<div class="a" style="left:1153.60px;top:528.00px;width:1.00px;height:35.50px;background:#e6e6e6;"></div>
<div class="a" style="left:1374.30px;top:528.00px;width:1.00px;height:35.50px;background:#e6e6e6;"></div>
<div class="a" style="left:1485.20px;top:528.00px;width:1.00px;height:35.50px;background:#e6e6e6;"></div>
<div class="a" style="left:1595.50px;top:528.00px;width:1.00px;height:35.50px;background:#e6e6e6;"></div>
<div class="a" style="left:1620.00px;top:528.00px;width:1.00px;height:35.50px;background:#e6e6e6;"></div>
<div class="t" style="left:492.9px;top:540.12px;width:220.1px;text-align:center;font-size:13.55px;color:#444;transform:scaleY(1.09);transform-origin:0 11.48px">Device Group</div>
<div class="t" style="left:713.0px;top:540.12px;width:220.4px;text-align:center;font-size:13.55px;color:#444;transform:scaleY(1.09);transform-origin:0 11.48px">Time Model</div>
<div class="t" style="left:933.4px;top:540.12px;width:220.2px;text-align:center;font-size:13.55px;color:#444;transform:scaleY(1.09);transform-origin:0 11.48px">Origin</div>
<div class="t" style="left:1153.6px;top:540.12px;width:220.7px;text-align:center;font-size:13.55px;color:#444;transform:scaleY(1.09);transform-origin:0 11.48px">User</div>
<div class="t" style="left:1374.3px;top:540.12px;width:110.9px;text-align:center;font-size:13.55px;color:#444;transform:scaleY(1.09);transform-origin:0 11.48px">Valid from</div>
<div class="t" style="left:1485.2px;top:540.12px;width:110.3px;text-align:center;font-size:13.55px;color:#444;transform:scaleY(1.09);transform-origin:0 11.48px">Valid to</div>
<div class="a" style="left:494.40px;top:563.50px;width:217.10px;height:34.00px;background:#f3f3f3;"></div>
<svg style="left:496px;top:574px;" width="13" height="13" viewBox="0 0 13 13"><circle cx="5" cy="5" r="4.2" stroke="#555" stroke-width="1.1" fill="none"/><path d="M8 8L12 12" stroke="#555" stroke-width="1.2"/></svg>
<div class="a" style="left:714.50px;top:563.50px;width:217.40px;height:34.00px;background:#f3f3f3;"></div>
<svg style="left:717px;top:574px;" width="13" height="13" viewBox="0 0 13 13"><circle cx="5" cy="5" r="4.2" stroke="#555" stroke-width="1.1" fill="none"/><path d="M8 8L12 12" stroke="#555" stroke-width="1.2"/></svg>
<div class="a" style="left:934.90px;top:563.50px;width:217.20px;height:34.00px;background:#f3f3f3;"></div>
<svg style="left:937px;top:574px;" width="13" height="13" viewBox="0 0 13 13"><circle cx="5" cy="5" r="4.2" stroke="#555" stroke-width="1.1" fill="none"/><path d="M8 8L12 12" stroke="#555" stroke-width="1.2"/></svg>
<div class="a" style="left:1155.10px;top:563.50px;width:217.70px;height:34.00px;background:#f3f3f3;"></div>
<svg style="left:1157px;top:574px;" width="13" height="13" viewBox="0 0 13 13"><circle cx="5" cy="5" r="4.2" stroke="#555" stroke-width="1.1" fill="none"/><path d="M8 8L12 12" stroke="#555" stroke-width="1.2"/></svg>
<div class="a" style="left:1375.80px;top:563.50px;width:107.90px;height:34.00px;background:#f3f3f3;"></div>
<div class="a" style="left:1486.70px;top:563.50px;width:107.30px;height:34.00px;background:#f3f3f3;"></div>
<div class="a" style="left:1597.00px;top:563.50px;width:21.50px;height:34.00px;background:#f3f3f3;"></div>
<div class="a" style="left:492.90px;top:598.10px;width:1104.00px;height:23.15px;background:#d1d9e2;"></div>
<div class="a" style="left:1595.80px;top:598.10px;width:24.20px;height:23.15px;background:#eceef1;"></div>
<svg style="left:494px;top:604px;" width="13" height="13" viewBox="0 0 13 13"><circle cx="6.5" cy="6.5" r="6.2" stroke="#aaa" stroke-width="1.1" fill="none"/><path d="M6.5 3.2V9.8" stroke="#b0b0b0" stroke-width="1.3"/></svg>
<div class="t" style="left:513.90px;top:605.12px;font-size:13.55px;color:#1a1a1a;transform:scaleY(1.09);transform-origin:0 11.48px;">Hauptgebäude G01</div>
<svg style="left:715px;top:604px;" width="13" height="13" viewBox="0 0 13 13"><circle cx="6.5" cy="6.5" r="6.2" stroke="#aaa" stroke-width="1.1" fill="none"/><path d="M6.5 3.2V9.8" stroke="#b0b0b0" stroke-width="1.3"/></svg>
<div class="t" style="left:734.40px;top:605.12px;font-size:13.55px;color:#1a1a1a;transform:scaleY(1.09);transform-origin:0 11.48px;">Mo-Fr 8-18</div>
<svg style="left:935.5px;top:603px;" width="13" height="13" viewBox="0 0 13 13"><g stroke="#808080" stroke-width="0.8" fill="none"><circle cx="3.8" cy="2.8" r="2.2"/><circle cx="9.2" cy="2.8" r="2.2"/><path d="M0.6 12.5V8C0.6 6.5 1.8 5.6 3.8 5.6C5.8 5.6 7 6.5 7 8M6 8C6 6.5 7.2 5.6 9.2 5.6C11.2 5.6 12.4 6.5 12.4 8V12.5M0.3 12.6H12.7"/><circle cx="6.5" cy="7.3" r="2"/><path d="M3.5 12.6V11.2C3.5 10.2 4.5 9.5 6.5 9.5C8.5 9.5 9.5 10.2 9.5 11.2V12.6"/></g></svg>
<div class="t" style="left:950.90px;top:602.52px;font-size:13.55px;color:#1a1a1a;transform:scaleY(1.09);transform-origin:0 11.48px;">Vertrieb</div>
<div class="t" style="left:1157.60px;top:602.22px;font-size:13.55px;color:#1a1a1a;transform:scaleY(1.09);transform-origin:0 11.48px;">fhaeufele</div>
<div class="t" style="left:1379.60px;top:603.12px;font-size:13.55px;color:#1a1a1a;transform:scaleY(1.09);transform-origin:0 11.48px;">11/09/2022</div>
<div class="t" style="left:1490.50px;top:603.12px;font-size:13.55px;color:#1a1a1a;transform:scaleY(1.09);transform-origin:0 11.48px;">12/31/2099</div>
<svg style="left:1600.5px;top:601px;" width="15" height="17" viewBox="0 0 15 17"><g stroke="#c6cacf" stroke-width="1.2" fill="none"><path d="M0.8 4.2H14.2M5 3.8V1.8C5 1.3 5.3 1 6 1H9C9.7 1 10 1.3 10 1.8V3.8M2.2 4.5L3.2 16.2H11.8L12.8 4.5M5.5 7V14M7.5 7V14M9.5 7V14"/></g></svg>
<div class="a" style="left:492.90px;top:621.25px;width:1104.00px;height:23.15px;background:#bfc5cd;"></div>
<div class="a" style="left:1595.80px;top:621.25px;width:24.20px;height:23.15px;background:#e5e7ea;"></div>
<svg style="left:494px;top:627px;" width="13" height="13" viewBox="0 0 13 13"><circle cx="6.5" cy="6.5" r="6.2" stroke="#aaa" stroke-width="1.1" fill="none"/><path d="M6.5 3.2V9.8" stroke="#b0b0b0" stroke-width="1.3"/></svg>
<div class="t" style="left:513.90px;top:628.27px;font-size:13.55px;color:#1a1a1a;transform:scaleY(1.09);transform-origin:0 11.48px;">Alle Zeiterfassungsgeräte</div>
<svg style="left:715px;top:627px;" width="13" height="13" viewBox="0 0 13 13"><circle cx="6.5" cy="6.5" r="6.2" stroke="#aaa" stroke-width="1.1" fill="none"/><path d="M6.5 3.2V9.8" stroke="#b0b0b0" stroke-width="1.3"/></svg>
<div class="t" style="left:734.40px;top:628.27px;font-size:13.55px;color:#1a1a1a;transform:scaleY(1.09);transform-origin:0 11.48px;">24x7</div>
<svg style="left:935.5px;top:626px;" width="13" height="13" viewBox="0 0 13 13"><g stroke="#808080" stroke-width="0.8" fill="none"><circle cx="3.8" cy="2.8" r="2.2"/><circle cx="9.2" cy="2.8" r="2.2"/><path d="M0.6 12.5V8C0.6 6.5 1.8 5.6 3.8 5.6C5.8 5.6 7 6.5 7 8M6 8C6 6.5 7.2 5.6 9.2 5.6C11.2 5.6 12.4 6.5 12.4 8V12.5M0.3 12.6H12.7"/><circle cx="6.5" cy="7.3" r="2"/><path d="M3.5 12.6V11.2C3.5 10.2 4.5 9.5 6.5 9.5C8.5 9.5 9.5 10.2 9.5 11.2V12.6"/></g></svg>
<div class="t" style="left:950.90px;top:625.67px;font-size:13.55px;color:#1a1a1a;transform:scaleY(1.09);transform-origin:0 11.48px;">Alle Mitarbeiter</div>
<div class="t" style="left:1157.60px;top:625.37px;font-size:13.55px;color:#1a1a1a;transform:scaleY(1.09);transform-origin:0 11.48px;">admin01</div>
<div class="t" style="left:1379.60px;top:626.27px;font-size:13.55px;color:#1a1a1a;transform:scaleY(1.09);transform-origin:0 11.48px;">05/15/2023</div>
<div class="t" style="left:1490.50px;top:626.27px;font-size:13.55px;color:#1a1a1a;transform:scaleY(1.09);transform-origin:0 11.48px;">12/31/2099</div>
<svg style="left:1600.5px;top:624px;" width="15" height="17" viewBox="0 0 15 17"><g stroke="#c6cacf" stroke-width="1.2" fill="none"><path d="M0.8 4.2H14.2M5 3.8V1.8C5 1.3 5.3 1 6 1H9C9.7 1 10 1.3 10 1.8V3.8M2.2 4.5L3.2 16.2H11.8L12.8 4.5M5.5 7V14M7.5 7V14M9.5 7V14"/></g></svg>
<div class="a" style="left:492.90px;top:644.40px;width:1104.00px;height:23.15px;background:#d1d9e2;"></div>
<div class="a" style="left:1595.80px;top:644.40px;width:24.20px;height:23.15px;background:#eceef1;"></div>
<svg style="left:494px;top:650px;" width="13" height="13" viewBox="0 0 13 13"><circle cx="6.5" cy="6.5" r="6.2" stroke="#aaa" stroke-width="1.1" fill="none"/><path d="M6.5 3.2V9.8" stroke="#b0b0b0" stroke-width="1.3"/></svg>
<div class="t" style="left:513.90px;top:651.42px;font-size:13.55px;color:#1a1a1a;transform:scaleY(1.09);transform-origin:0 11.48px;">Labor G04</div>
<svg style="left:715px;top:650px;" width="13" height="13" viewBox="0 0 13 13"><circle cx="6.5" cy="6.5" r="6.2" stroke="#aaa" stroke-width="1.1" fill="none"/><path d="M6.5 3.2V9.8" stroke="#b0b0b0" stroke-width="1.3"/></svg>
<div class="t" style="left:734.40px;top:651.42px;font-size:13.55px;color:#1a1a1a;transform:scaleY(1.09);transform-origin:0 11.48px;">24x7</div>
<svg style="left:935.5px;top:649px;" width="13" height="13" viewBox="0 0 13 13"><g stroke="#808080" stroke-width="0.8" fill="none"><circle cx="3.8" cy="2.8" r="2.2"/><circle cx="9.2" cy="2.8" r="2.2"/><path d="M0.6 12.5V8C0.6 6.5 1.8 5.6 3.8 5.6C5.8 5.6 7 6.5 7 8M6 8C6 6.5 7.2 5.6 9.2 5.6C11.2 5.6 12.4 6.5 12.4 8V12.5M0.3 12.6H12.7"/><circle cx="6.5" cy="7.3" r="2"/><path d="M3.5 12.6V11.2C3.5 10.2 4.5 9.5 6.5 9.5C8.5 9.5 9.5 10.2 9.5 11.2V12.6"/></g></svg>
<div class="t" style="left:950.90px;top:648.82px;font-size:13.55px;color:#1a1a1a;transform:scaleY(1.09);transform-origin:0 11.48px;">Alle Mitarbeiter</div>
<div class="t" style="left:1157.60px;top:648.52px;font-size:13.55px;color:#1a1a1a;transform:scaleY(1.09);transform-origin:0 11.48px;">admin01</div>
<div class="t" style="left:1379.60px;top:649.42px;font-size:13.55px;color:#1a1a1a;transform:scaleY(1.09);transform-origin:0 11.48px;">05/15/2023</div>
<div class="t" style="left:1490.50px;top:649.42px;font-size:13.55px;color:#1a1a1a;transform:scaleY(1.09);transform-origin:0 11.48px;">12/31/2099</div>
<svg style="left:1600.5px;top:647px;" width="15" height="17" viewBox="0 0 15 17"><g stroke="#c6cacf" stroke-width="1.2" fill="none"><path d="M0.8 4.2H14.2M5 3.8V1.8C5 1.3 5.3 1 6 1H9C9.7 1 10 1.3 10 1.8V3.8M2.2 4.5L3.2 16.2H11.8L12.8 4.5M5.5 7V14M7.5 7V14M9.5 7V14"/></g></svg>
<div class="a" style="left:492.90px;top:667.55px;width:1104.00px;height:23.15px;background:#bfc5cd;"></div>
<div class="a" style="left:1595.80px;top:667.55px;width:24.20px;height:23.15px;background:#e5e7ea;"></div>
<svg style="left:494px;top:673px;" width="13" height="13" viewBox="0 0 13 13"><circle cx="6.5" cy="6.5" r="6.2" stroke="#aaa" stroke-width="1.1" fill="none"/><path d="M6.5 3.2V9.8" stroke="#b0b0b0" stroke-width="1.3"/></svg>
<div class="t" style="left:513.90px;top:674.57px;font-size:13.55px;color:#1a1a1a;transform:scaleY(1.09);transform-origin:0 11.48px;">Produktion und Lager G03</div>
<svg style="left:715px;top:673px;" width="13" height="13" viewBox="0 0 13 13"><circle cx="6.5" cy="6.5" r="6.2" stroke="#aaa" stroke-width="1.1" fill="none"/><path d="M6.5 3.2V9.8" stroke="#b0b0b0" stroke-width="1.3"/></svg>
<div class="t" style="left:734.40px;top:674.57px;font-size:13.55px;color:#1a1a1a;transform:scaleY(1.09);transform-origin:0 11.48px;">24x7</div>
<svg style="left:935.5px;top:673px;" width="13" height="13" viewBox="0 0 13 13"><g stroke="#808080" stroke-width="0.8" fill="none"><circle cx="3.8" cy="2.8" r="2.2"/><circle cx="9.2" cy="2.8" r="2.2"/><path d="M0.6 12.5V8C0.6 6.5 1.8 5.6 3.8 5.6C5.8 5.6 7 6.5 7 8M6 8C6 6.5 7.2 5.6 9.2 5.6C11.2 5.6 12.4 6.5 12.4 8V12.5M0.3 12.6H12.7"/><circle cx="6.5" cy="7.3" r="2"/><path d="M3.5 12.6V11.2C3.5 10.2 4.5 9.5 6.5 9.5C8.5 9.5 9.5 10.2 9.5 11.2V12.6"/></g></svg>
<div class="t" style="left:950.90px;top:671.97px;font-size:13.55px;color:#1a1a1a;transform:scaleY(1.09);transform-origin:0 11.48px;">Alle Mitarbeiter</div>
<div class="t" style="left:1157.60px;top:671.67px;font-size:13.55px;color:#1a1a1a;transform:scaleY(1.09);transform-origin:0 11.48px;">Account OSC</div>
<div class="t" style="left:1379.60px;top:672.57px;font-size:13.55px;color:#1a1a1a;transform:scaleY(1.09);transform-origin:0 11.48px;">04/05/2024</div>
<div class="t" style="left:1490.50px;top:672.57px;font-size:13.55px;color:#1a1a1a;transform:scaleY(1.09);transform-origin:0 11.48px;">12/31/2099</div>
<svg style="left:1600.5px;top:670px;" width="15" height="17" viewBox="0 0 15 17"><g stroke="#c6cacf" stroke-width="1.2" fill="none"><path d="M0.8 4.2H14.2M5 3.8V1.8C5 1.3 5.3 1 6 1H9C9.7 1 10 1.3 10 1.8V3.8M2.2 4.5L3.2 16.2H11.8L12.8 4.5M5.5 7V14M7.5 7V14M9.5 7V14"/></g></svg>
<div class="a" style="left:492.90px;top:690.70px;width:1104.00px;height:23.15px;background:#d1d9e2;"></div>
<div class="a" style="left:1595.80px;top:690.70px;width:24.20px;height:23.15px;background:#eceef1;"></div>
<svg style="left:494px;top:696px;" width="13" height="13" viewBox="0 0 13 13"><circle cx="6.5" cy="6.5" r="6.2" stroke="#aaa" stroke-width="1.1" fill="none"/><path d="M6.5 3.2V9.8" stroke="#b0b0b0" stroke-width="1.3"/></svg>
<div class="t" style="left:513.90px;top:697.72px;font-size:13.55px;color:#1a1a1a;transform:scaleY(1.09);transform-origin:0 11.48px;">Labor G04</div>
<svg style="left:715px;top:696px;" width="13" height="13" viewBox="0 0 13 13"><circle cx="6.5" cy="6.5" r="6.2" stroke="#aaa" stroke-width="1.1" fill="none"/><path d="M6.5 3.2V9.8" stroke="#b0b0b0" stroke-width="1.3"/></svg>
<div class="t" style="left:734.40px;top:697.72px;font-size:13.55px;color:#1a1a1a;transform:scaleY(1.09);transform-origin:0 11.48px;">24x7</div>
<svg style="left:935.5px;top:696px;" width="13" height="13" viewBox="0 0 13 13"><g stroke="#808080" stroke-width="0.8" fill="none"><circle cx="3.8" cy="2.8" r="2.2"/><circle cx="9.2" cy="2.8" r="2.2"/><path d="M0.6 12.5V8C0.6 6.5 1.8 5.6 3.8 5.6C5.8 5.6 7 6.5 7 8M6 8C6 6.5 7.2 5.6 9.2 5.6C11.2 5.6 12.4 6.5 12.4 8V12.5M0.3 12.6H12.7"/><circle cx="6.5" cy="7.3" r="2"/><path d="M3.5 12.6V11.2C3.5 10.2 4.5 9.5 6.5 9.5C8.5 9.5 9.5 10.2 9.5 11.2V12.6"/></g></svg>
<div class="t" style="left:950.90px;top:695.12px;font-size:13.55px;color:#1a1a1a;transform:scaleY(1.09);transform-origin:0 11.48px;">tst</div>
<div class="t" style="left:1157.60px;top:694.82px;font-size:13.55px;color:#1a1a1a;transform:scaleY(1.09);transform-origin:0 11.48px;">Jochen</div>
<div class="t" style="left:1379.60px;top:695.72px;font-size:13.55px;color:#1a1a1a;transform:scaleY(1.09);transform-origin:0 11.48px;">02/12/2025</div>
<div class="t" style="left:1490.50px;top:695.72px;font-size:13.55px;color:#1a1a1a;transform:scaleY(1.09);transform-origin:0 11.48px;">12/31/2099</div>
<svg style="left:1600.5px;top:693px;" width="15" height="17" viewBox="0 0 15 17"><g stroke="#c6cacf" stroke-width="1.2" fill="none"><path d="M0.8 4.2H14.2M5 3.8V1.8C5 1.3 5.3 1 6 1H9C9.7 1 10 1.3 10 1.8V3.8M2.2 4.5L3.2 16.2H11.8L12.8 4.5M5.5 7V14M7.5 7V14M9.5 7V14"/></g></svg>
<div class="a" style="left:492.90px;top:731.50px;width:81.50px;height:33.10px;background:#6fa6d0;"></div>
<div class="t" style="left:518.00px;top:742.30px;font-size:14.4px;color:#fff;transform:scaleY(1.09);transform-origin:0 12.20px;">Add</div>
<div class="a" style="left:102.00px;top:928.00px;width:1532.00px;height:30.00px;background:#e3e6e8;"></div>
<div class="a" style="left:567.90px;top:928.00px;width:117.80px;height:30.00px;background:#a9d0ea;"></div>
<div class="t" style="left:110.70px;top:935.73px;font-size:15.2px;color:#666;transform:scaleY(1.09);transform-origin:0 12.87px;">Launchpad</div>
<svg style="left:192.9px;top:936px;" width="14" height="14" viewBox="0 0 14 14"><path d="M1 1L13 13M13 1L1 13" stroke="#666" stroke-width="1.3"/></svg>
<div class="t" style="left:222.50px;top:935.73px;font-size:15.2px;color:#666;transform:scaleY(1.09);transform-origin:0 12.87px;">Persons</div>
<svg style="left:282.9px;top:936px;" width="14" height="14" viewBox="0 0 14 14"><path d="M1 1L13 13M13 1L1 13" stroke="#666" stroke-width="1.3"/></svg>
<div class="t" style="left:313.20px;top:935.73px;font-size:15.2px;color:#666;transform:scaleY(1.09);transform-origin:0 12.87px;">Person Groups</div>
<svg style="left:419.6px;top:936px;" width="14" height="14" viewBox="0 0 14 14"><path d="M1 1L13 13M13 1L1 13" stroke="#666" stroke-width="1.3"/></svg>
<div class="t" style="left:451.00px;top:935.73px;font-size:15.2px;color:#666;transform:scaleY(1.09);transform-origin:0 12.87px;">Lock Persons</div>
<svg style="left:546.4px;top:936px;" width="14" height="14" viewBox="0 0 14 14"><path d="M1 1L13 13M13 1L1 13" stroke="#666" stroke-width="1.3"/></svg>
<div class="t" style="left:576.80px;top:935.73px;font-size:15.2px;color:#666;transform:scaleY(1.09);transform-origin:0 12.87px;">Permissions</div>
<svg style="left:665px;top:936px;" width="14" height="14" viewBox="0 0 14 14"><path d="M1 1L13 13M13 1L1 13" stroke="#666" stroke-width="1.3"/></svg>
<div class="a" style="left:1617.20px;top:938.80px;width:13.20px;height:8.20px;background:#c6c6c6;"></div>
<div class="a" style="left:1617.20px;top:938.80px;width:13.20px;height:2.00px;background:#a2a2a2;"></div>
<div class="a" style="left:1617.20px;top:941.90px;width:13.20px;height:2.00px;background:#a2a2a2;"></div>
<div class="a" style="left:1617.20px;top:945.00px;width:13.20px;height:2.00px;background:#a2a2a2;"></div>
</div></div>
</body></html>
